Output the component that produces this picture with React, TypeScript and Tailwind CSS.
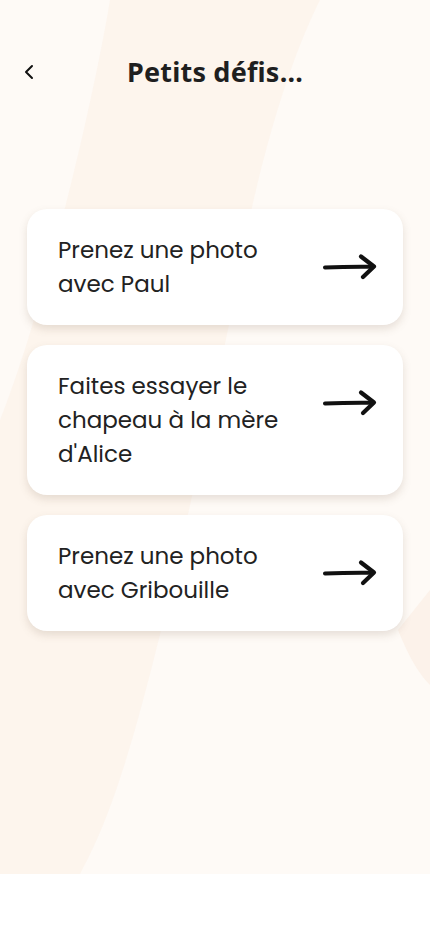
import React from "react";

const challenges = [
  ["Prenez une photo", "avec Paul"],
  ["Faites essayer le", "chapeau à la mère", "d'Alice"],
  ["Prenez une photo", "avec Gribouille"],
];

function Arrow() {
  return (
    <svg width="54" height="30" viewBox="0 0 54 30" fill="none">
      <path d="M2 15.5 C 18 14.8, 34 14.6, 50 14.8" stroke="#111" strokeWidth="4" strokeLinecap="round" />
      <path d="M38 4.5 L 51 14.5 L 40 25" stroke="#111" strokeWidth="4.2" strokeLinecap="round" strokeLinejoin="round" />
    </svg>
  );
}

export default function App() {
  return (
    <div className="w-[430px] h-[931px] bg-white" style={{ fontFamily: "Poppins, 'Noto Sans', sans-serif" }}>
      <div className="relative h-[874px] overflow-hidden bg-[#fefaf6]">
        <svg className="absolute inset-0" width="430" height="874" viewBox="0 0 430 874">
          <path d="M110 0 L320 0 C 280 80, 250 200, 230 320 C 150 700, 120 800, 80 874 L 0 874 L 0 420 C 40 320, 90 120, 110 0 Z" fill="#fcf2ea" opacity="0.7" />
          <path d="M398 630 C 410 660, 420 675, 430 685 L 430 590 Z" fill="#fcf2ea" />
        </svg>
        <div className="relative flex flex-col">
          <div className="relative h-[56px] mt-[44px] flex items-center justify-center">
            <button className="absolute left-[20px] top-[16px] w-[18px] h-[24px] flex items-center justify-center">
              <svg width="12" height="16" viewBox="0 0 12 16" fill="none">
                <path d="M9 2 L3 8 L9 14" stroke="#111" strokeWidth="2" strokeLinecap="round" strokeLinejoin="round" />
              </svg>
            </button>
            <h1 className="text-[27px] font-bold text-[#1f1f1f] tracking-[0.2px]" style={{ fontFamily: "'Noto Sans', sans-serif" }}>
              Petits défis...
            </h1>
          </div>
          <div className="flex flex-col gap-[20px] px-[27px] pt-[109px]">
            {challenges.map((lines, i) => (
              <div
                key={i}
                className="flex items-start justify-between bg-white rounded-[20px] pl-[31px] pr-[26px] py-[24px] shadow-[0_4px_8px_rgba(120,100,80,0.18)]"
              >
                <p className="text-[23px] leading-[34px] text-[#222]">
                  {lines.map((l, j) => (
                    <span key={j} className="block">{l}</span>
                  ))}
                </p>
                <div className="mt-[19px]">
                  <Arrow />
                </div>
              </div>
            ))}
          </div>
        </div>
      </div>
    </div>
  );
}
